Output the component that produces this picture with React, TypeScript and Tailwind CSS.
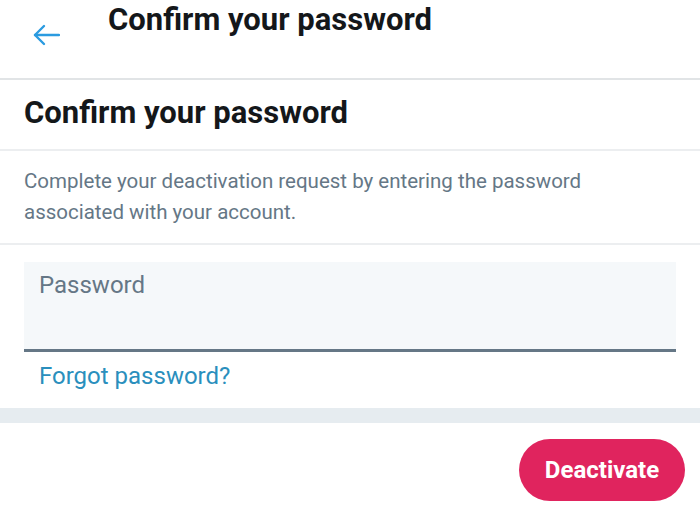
export default function App() {
  return (
    <div className="w-[700px] h-[511px] bg-white overflow-hidden font-['Roboto',sans-serif]">
      {/* Top bar */}
      <div className="h-[80px] border-b-2 border-[#e1e4e6] flex items-start">
        <div className="w-[108px] h-full flex items-center pl-[33px] pb-[8px]">
          <svg width="27" height="22" viewBox="0 0 27 22" fill="none" stroke="#2b9be0" strokeWidth="2.4" strokeLinecap="round" strokeLinejoin="round">
            <path d="M26 11H2" />
            <path d="M11 2L2 11L11 20" />
          </svg>
        </div>
        <h1 className="text-[31px] leading-none font-bold text-[#14171a] mt-[4px]">Confirm your password</h1>
      </div>

      {/* Heading */}
      <div className="h-[71px] border-b-2 border-[#eceef0] flex items-center px-[24px]">
        <h2 className="text-[31px] leading-none font-bold text-[#14171a] pb-[4px]">Confirm your password</h2>
      </div>

      {/* Description */}
      <div className="h-[94px] border-b-2 border-[#eceef0] px-[24px] pt-[15px]">
        <p className="text-[20.5px] leading-[31px] text-[#657786]">
          Complete your deactivation request by entering the password
          <br />
          associated with your account.
        </p>
      </div>

      {/* Password field */}
      <div className="px-[24px] pt-[17px]">
        <div className="h-[90px] bg-[#f5f8fa] border-b-[3px] border-[#657786] px-[15px] pt-[7px]">
          <span className="text-[24px] leading-[32px] text-[#657786]">Password</span>
        </div>
        <div className="pl-[15px] pt-[8px] h-[56px]">
          <span className="text-[24px] leading-[32px] text-[#2a8fbd]">Forgot password?</span>
        </div>
      </div>

      <div className="h-[15px] bg-[#e6ecf0]" />

      {/* Footer */}
      <div className="flex justify-end pr-[15px] pt-[16px]">
        <button className="w-[166px] h-[62px] rounded-full bg-[#e0245e] text-white text-[24px] font-bold">
          Deactivate
        </button>
      </div>
    </div>
  );
}
